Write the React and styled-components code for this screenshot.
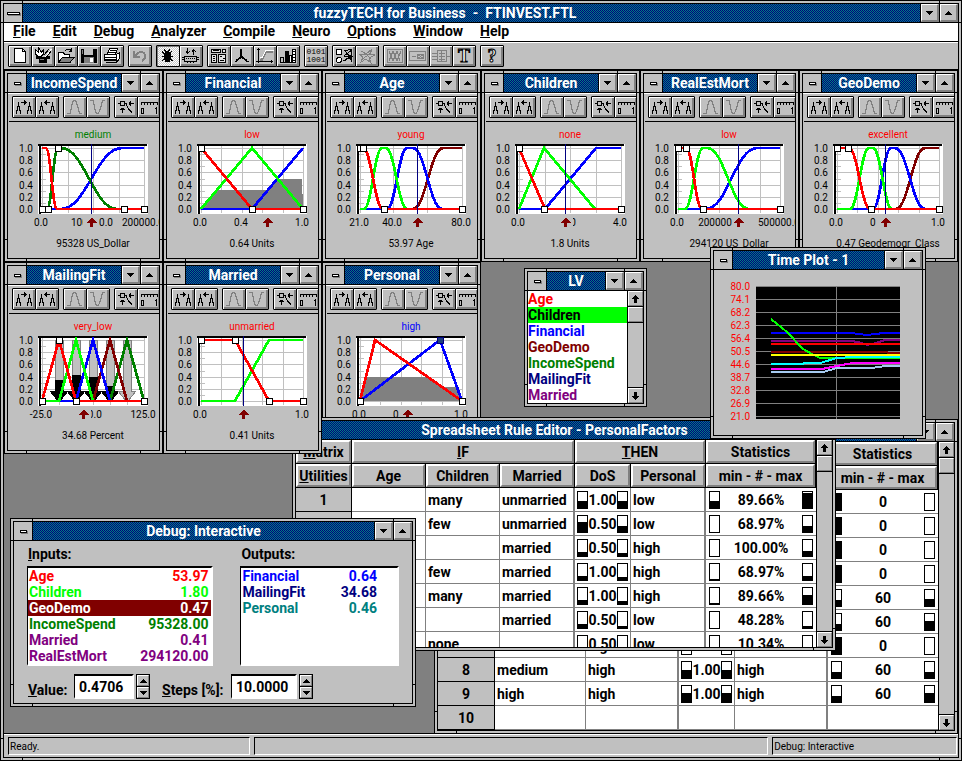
import React from "react";
import styled, { createGlobalStyle, css } from "styled-components";

const SYSTEM = `Roboto, "Liberation Sans", sans-serif`;
const SMALL = `Roboto, "Liberation Sans", sans-serif`;

const GlobalStyle = createGlobalStyle`
  *, *::before, *::after { box-sizing: border-box; }
  body { margin: 0; background: #808080; font: 700 14px/16px ${SYSTEM}; color: #000; }
  button, input { font: inherit; color: inherit; margin: 0; border-radius: 0; }
  ul, p { margin: 0; padding: 0; list-style: none; }
`;

/* ---------- window frames ---------- */

const frame = css`
  border: 1px solid #000;
  padding: 2px;
  background:
    linear-gradient(#000, #000) 21px 0 / 1px 100% no-repeat,
    linear-gradient(#000, #000) calc(100% - 21px) 0 / 1px 100% no-repeat,
    linear-gradient(#000, #000) 0 21px / 100% 1px no-repeat,
    linear-gradient(#000, #000) 0 calc(100% - 21px) / 100% 1px no-repeat,
    #c0c0c0;
  display: flex;
  flex-direction: column;
`;

const Shell = styled.div`
  ${frame}
  min-height: 100vh;
`;

const ChildFrame = styled.section`
  ${frame}
  position: absolute;
  left: ${(p) => p.$x}px;
  top: ${(p) => p.$y}px;
  width: ${(p) => p.$w}px;
  height: ${(p) => p.$h}px;
`;

const Inner = styled.div`
  flex: 1;
  min-height: 0;
  border: 1px solid #000;
  background: #c0c0c0;
  display: flex;
  flex-direction: column;
  overflow: hidden;
`;

const TitleRow = styled.header`
  display: flex;
  flex: none;
  height: 19px;
  border-bottom: 1px solid #000;
`;

/* Two-colour dither: a 2px checkerboard of navy and teal. */
const TitleText = styled.h2`
  flex: 1;
  min-width: 0;
  margin: 0;
  padding-right: ${(p) => (p.$main ? 53 : 0)}px;
  font: 700 14px/18px ${SYSTEM};
  text-align: center;
  white-space: nowrap;
  overflow: hidden;
  color: #fff;
  border: solid #000;
  border-width: 0 1px;
  background: repeating-conic-gradient(#000080 0 25%, #008080 0 50%) 0 0 / 2px 2px;
`;

const SysButton = styled.button`
  width: 18px;
  padding: 0;
  border: 0;
  background: #c0c0c0;
  display: grid;
  place-items: center;
  &::before {
    content: "";
    width: ${(p) => (p.$wide ? 13 : 7)}px;
    height: 3px;
    background: #fff;
    border: 1px solid #000;
    box-shadow: 1px 1px 0 #808080;
  }
`;

const BevelButton = styled.button`
  flex: none;
  width: ${(p) => p.$w || 18}px;
  height: ${(p) => p.$h || 18}px;
  padding: 0;
  display: grid;
  place-items: center;
  background: #c0c0c0;
  border: solid;
  border-width: 1px 2px 2px 1px;
  border-color: #fff #808080 #808080 #fff;
  & + & { box-shadow: -1px 0 0 #000; margin-left: 1px; }
`;

const Tri = ({ up }) => (
  <svg width="7" height="4" viewBox="0 0 7 4" shapeRendering="crispEdges" aria-hidden="true">
    <path d={up ? "M3 0h1v1h1v1h1v1h1v1H0V3h1V2h1V1h1z" : "M0 0h7v1H6v1H5v1H4v1H3V3H2V2H1V1H0z"} />
  </svg>
);

const Arrow = ({ up }) => (
  <svg width="9" height="8" viewBox="0 0 9 8" shapeRendering="crispEdges" aria-hidden="true">
    <path
      d={
        up
          ? "M4 0h1v1h1v1h1v1h1v1h-2v4h-3v-4h-2v-1h1v-1h1v-1h1z"
          : "M3 0h3v4h2v1h-1v1h-1v1h-1v1h-1v-1h-1v-1h-1v-1h-1v-1h2z"
      }
    />
  </svg>
);

function TitleBar({ title, main }) {
  return (
    <TitleRow>
      <SysButton $wide={main} aria-label="Control menu" />
      <TitleText as={main ? "h1" : "h2"} $main={main}>
        {title}
      </TitleText>
      <BevelButton aria-label="Minimize">
        <Tri />
      </BevelButton>
      <BevelButton aria-label="Maximize">
        <Tri up />
      </BevelButton>
    </TitleRow>
  );
}

function Win({ x, y, w, h, title, children }) {
  return (
    <ChildFrame $x={x} $y={y} $w={w} $h={h}>
      <Inner>
        <TitleBar title={title} />
        {children}
      </Inner>
    </ChildFrame>
  );
}

/* ---------- menu and toolbars ---------- */

const MenuBar = styled.nav`
  display: flex;
  gap: 17px;
  height: 19px;
  padding: 0 9px;
  background: #fff;
  border-bottom: 1px solid #000;
`;

const MenuItem = styled.button`
  padding: 0 0 2px;
  border: 0;
  background: none;
  line-height: 16px;
`;

const ToolBar = styled.div`
  display: flex;
  flex: none;
  gap: 4px;
  height: 28px;
  padding: 2px 4px;
  background: #c0c0c0;
  border-top: 1px solid #fff;
  border-bottom: ${(p) => (p.$main ? "1px solid #000" : "0")};
`;

const ToolGroup = styled.div`
  display: flex;
  flex: none;
`;

const ToolButton = styled.button`
  flex: none;
  width: 24px;
  height: 22px;
  padding: 0;
  border: 1px solid #000;
  border-radius: 1px;
  color: ${(p) => (p.$dim ? "#808080" : "#000")};
  background: ${(p) =>
    p.$down ? "repeating-conic-gradient(#fff 0 25%, #c8c8c8 0 50%) 0 0 / 2px 2px" : "#c0c0c0"};
  box-shadow: ${(p) =>
    p.$down ? "inset 1px 1px 0 #808080" : "inset 1px 1px 0 #fff, inset -1px -1px 0 #808080, inset -2px -2px 0 #808080"};
  & + & { margin-left: -1px; }
  svg { display: block; }
`;

const G = ({ children }) => (
  <svg
    width="22"
    height="20"
    viewBox="0 0 22 20"
    fill="none"
    stroke="currentColor"
    shapeRendering="crispEdges"
    aria-hidden="true"
  >
    {children}
  </svg>
);

const twinPeaks =
  "M3.5 13v4M4.500 9v5M5.500 5v5M6.500 9v5M7.500 13v4M14.500 13v4M15.500 9v5M16.500 5v5M17.500 9v5M18.500 13v4";

const icons = {
  page: (
    <G>
      <path d="M5.5 2.5h8l3 3v11h-11z" fill="#fff" />
      <path d="M13.5 2.5v3h3" />
    </G>
  ),
  wizard: (
    <G>
      <path d="M3.500 3.500l3 3v-4.500l3 4 2-2v4l-2 2h-4l-2-2zM12 9l5-6" fill="#fff" />
      <path d="M19.500 3l-6 8" stroke="#fff" />
      <path d="M19 5l-5 7" />
      <path d="M4 10.500h3v1h7v-1h3v2h-3v4H7v-4H4z" fill="currentColor" />
      <path d="M8 13.500h4" stroke="#808080" />
    </G>
  ),
  open: (
    <G>
      <path d="M3.5 16.5v-10h5l1 2h5v3" fill="#fff" />
      <path d="M3.5 16.5l4-5.5h12l-4.500 5.500z" fill="#808080" />
      <path d="M10 4.500q4-3 6 0M16.500 1.500v4h-3" />
    </G>
  ),
  save: (
    <G>
      <path d="M3 3h15l1 1v13H3z" fill="currentColor" stroke="none" />
      <path d="M6 3h9v6H6z" fill="#c0c0c0" stroke="none" />
      <path d="M6 11h10v6H6z" fill="#808080" stroke="none" />
      <path d="M12 12h3v4h-3z" fill="#fff" stroke="none" />
      <path d="M4 4h1v4H4z" fill="#808080" stroke="none" />
    </G>
  ),
  print: (
    <G>
      <path d="M6.500 8l2-5.500h8l-2 5.500" fill="#fff" />
      <path d="M9 4.500h6M8 6.500h6" />
      <path d="M3.500 8.500h12v6h-12zM15.500 8.500l3-2v6l-3 3" fill="#fff" />
      <path d="M3 11.500h12M5 16.500h10l3-3M4 13.500h11" />
    </G>
  ),
  undo: (
    <G>
      <path d="M5 5v6h6M6 10c3-5 10-5 10 0 0 3-1 4-3 5" strokeWidth="2" />
    </G>
  ),
  bug: (
    <G>
      <path d="M8 5h4v1h2v8h-1v2H8v-2H7V7h1z" fill="currentColor" stroke="none" />
      <path d="M7 3l2 3M13 3l-2 3M5 5l3 4M15 5l-3 4M5 10.500h11M5 15l3-3M16 15l-4-3" />
    </G>
  ),
  chip: (
    <G>
      <path d="M4.500 10.500h12v5h-12zM2 11.500h2M2 13.500h2M17 11.500h2M17 13.500h2" />
      <path d="M6 12.500h10" strokeDasharray="1 1" />
      <path d="M7 16.500h8" strokeDasharray="1 2" />
      <path d="M7.500 2v6M6 6.500h3M5.500 5.500h1M8.500 5.500h1M13.500 3v6M12 4.500h3M11.500 5.500h1M14.500 5.500h1" />
    </G>
  ),
  project: (
    <G>
      <path d="M3.500 3.500h9v3h-9zM14.500 3.500h3v3h-3zM3.500 8.500h5v8h-5zM10.500 8.500h7v8h-7z" fill="#e0e0e0" />
      <path d="M5 4.500h6M5 10.500h2M5 12.500h2M5 14.500h2M12 10.500h2M15 12.500h2M12 14.500h4" />
    </G>
  ),
  surface: (
    <G>
      <path d="M10 3v9M10 11l-5 4M11 11l5 4" strokeWidth="2" />
      <path d="M4 15.500h2M15 15.500h3" />
    </G>
  ),
  transfer: (
    <G>
      <path d="M4.500 2v15M2 15.500h17M3 3.500h3M17.500 14v3" />
      <path d="M6 13.500h2l4-8h7" stroke="#808080" strokeWidth="2" />
      <path d="M6 12l2-.5l4-7h8" stroke="#fff" />
    </G>
  ),
  bars: (
    <G>
      <path d="M3 16.500h16M3.500 11.500h3v5h-3z" />
      <path d="M8.500 5.500h3v11h-3z" fill="currentColor" />
      <path d="M12.500 9.500h2v7h-2zM15.500 3.500h3v13h-3z" fill="#fff" />
      <path d="M16 5.500h2M16 8.500h2M16 11.500h2M16 14.500h2" />
    </G>
  ),
  net: (
    <G>
      <path d="M3.500 3.500h5v5h-5z" fill="#fff" />
      <circle cx="6" cy="14" r="2.500" fill="#fff" />
      <path d="M11 5l8-2M12 5l5 5M18 3v11M11 10l8-6M11 10h9M12 14l7-5M12 15l6-6M14 7l5 9M18 11l-8 4" />
    </G>
  ),
  mesh: (
    <G>
      <path d="M5 5l5 3 6-5-2 5 5 1-6 3 2 5-5-4-5 3 2-5-4-3h11M5 14l10-7M8 6l7 7" />
    </G>
  ),
  wave: (
    <G>
      <path d="M3.500 3.500h15v13h-15zM5 5l4 10 4-10 3 10M5 15l4-10 4 10 4-10" />
    </G>
  ),
  card: (
    <G>
      <path d="M2.500 5.500h16v9h-16zM5 10.500h4M10.500 8.500h6v4h-6zM11 9l5 3M16 9l-5 3" />
    </G>
  ),
  block: (
    <G>
      <path d="M7.500 4.500h9v11h-9zM2 7.500h5M2 10.500h5M2 13.500h5M17 10.500h3M9 7.500h6M9 10.500h6M9 13.500h6M11.500 5v10" />
    </G>
  ),
  left: (
    <G>
      <path d={`${twinPeaks}M8 5.500h6M11.500 3v5M12.500 4v3`} />
    </G>
  ),
  right: (
    <G>
      <path d={`${twinPeaks}M8 5.500h6M10.500 3v5M9.500 4v3`} />
    </G>
  ),
  peak: (
    <G>
      <path d="M3 16.500h3v-2l1-2v-2l1-3 1-3 1-1h1l1 1 1 3 1 3v2l1 2v2h3" />
    </G>
  ),
  valley: (
    <G>
      <path d="M3 3.500h3v2l1 2v2l1 3 1 3 1 1h1l1-1 1-3 1-3v-2l1-2v-2h3" />
    </G>
  ),
  points: (
    <G>
      <path d="M5.500 4.500h4v4h-4zM3 6.500h2M10 6.500h2M11.500 7v2M12.500 9v2M13.500 11v2M14.500 12v2M15.500 13v2M16.500 14v2M7.500 11v5M5 12.500h5M6 11.500h3M14 6.500h5M15.500 4v5M14.500 5v3" />
    </G>
  ),
  scale: (
    <G>
      <path d="M3.500 8v-2.500h16v2.500M6.500 6v2M9.500 6v2M12.500 6v2M15.500 6v2M3.500 11.500h2v5h-2zM18.500 10v7M17 11.500h1" />
    </G>
  ),
};

const BinaryLabel = styled.span`
  display: block;
  font: 400 8px/8px "Liberation Mono", monospace;
  text-align: center;
`;

const GlyphText = styled.text`
  font: 700 ${(p) => p.$size}px "Liberation Serif", serif;
  fill: #fff;
  stroke: #000;
`;

const Glyph = ({ ch, size }) => (
  <svg width="22" height="20" viewBox="0 0 22 20" aria-hidden="true">
    <GlyphText $size={size} x="11" y="16" textAnchor="middle">
      {ch}
    </GlyphText>
  </svg>
);

const mainTools = [
  ["page", "wizard", "open", "save", "print"],
  ["-undo"],
  ["+bug", "chip"],
  ["project", "surface", "transfer", "bars"],
  ["binary"],
  ["net", "-mesh"],
  ["-wave", "-card", "-block", "text"],
  ["help"],
];

const editorTools = [
  ["left", "right"],
  ["-peak", "-valley"],
  ["points", "scale"],
];

function toolFace(name) {
  if (name === "binary")
    return (
      <BinaryLabel>
        0101
        <br />
        1001
      </BinaryLabel>
    );
  if (name === "text") return <Glyph ch="T" size={18} />;
  if (name === "help") return <Glyph ch="?" size={18} />;
  return icons[name];
}

const Tools = ({ groups, main }) => (
  <ToolBar $main={main}>
    {groups.map((group) => (
      <ToolGroup key={group[0]}>
        {group.map((id) => {
          const name = id.replace(/^[+-]/, "");
          return (
            <ToolButton key={id} aria-label={name} $dim={id[0] === "-"} $down={id[0] === "+"}>
              {toolFace(name)}
            </ToolButton>
          );
        })}
      </ToolGroup>
    ))}
  </ToolBar>
);

/* ---------- membership function editors ---------- */

const Body = styled.div`
  flex: none;
  margin-left: 1px;
  border-top: 1px solid #000;
  padding: 6px 0 0;
  font: 400 10px/13px ${SMALL};
`;

const Caption = styled.p`
  margin-left: 18px;
  height: 12px;
  text-align: center;
  white-space: nowrap;
  color: ${(p) => p.$color || "#000"};
`;

const Value = styled(Caption)`
  margin-top: 7px;
`;

const Plot = styled.svg`
  display: block;
  margin-left: -1px;
`;

const AxisText = styled.text`
  font: 400 10px ${SMALL};
  fill: ${(p) => p.$color || "#000"};
`;

const PX = (u) => 34 + u;
const PY = (v) => 69 - v * 61;

function linePath(points, smooth) {
  return points
    .map(([u, v], i) => {
      if (i === 0) return `M${PX(u)} ${PY(v)}`;
      const [pu, pv] = points[i - 1];
      if (!smooth || pv === v) return `L${PX(u)} ${PY(v)}`;
      const m = (u - pu) * 0.42;
      return `C${PX(pu + m)} ${PY(pv)} ${PX(u - m)} ${PY(v)} ${PX(u)} ${PY(v)}`;
    })
    .join("");
}

function BlockArrow({ u, level }) {
  const x = PX(u);
  const top = PY(level);
  return (
    <g stroke="#808080">
      <path d={`M${x - 4} 8h8v51h5l-8 10h-2l-8 -10h5z`} fill="#c0c0c0" />
      {level > 0 && <path d={`M${x - 4} ${top}h8V59h5l-8 10h-2l-8 -10h5z`} fill="#000" stroke="#000" />}
    </g>
  );
}

function MembershipPlot({ grid, labels, terms, smooth, boxes, value, arrow, clear = 8, area, bars, picked }) {
  return (
    <Plot width="151" height="90" viewBox="0 0 151 90" shapeRendering="crispEdges">
      <rect x="30" y="4" width="110" height="70" fill="#fff" />
      <path d="M32 74V5" stroke="#000" strokeWidth="2" />
      <path d="M30 5H139" stroke="#000" strokeWidth="2" />
      <g fill="#c0c0c0">
        {[0, 0.2, 0.4, 0.6, 0.8, 1].map((v) => (
          <rect key={v} x="33" y={Math.round(PY(v))} width="104" height="1" />
        ))}
        {[0.1, 0.3, 0.5, 0.7, 0.9].map((v) => (
          <rect key={v} x="33" y={Math.round(PY(v))} width="5" height="1" />
        ))}
        {grid.map((u) => (
          <rect key={u} x={PX(u)} y="6" width="1" height="67" />
        ))}
      </g>
      {area && <path d={`${linePath(area)}z`} fill="#808080" />}
      {bars && bars.map(([u, level]) => <BlockArrow key={u} u={u} level={level} />)}
      <g fill="none" strokeWidth="2.700">
        {terms.map(([color, points]) => (
          <path key={color} d={linePath(points, smooth)} stroke={color} />
        ))}
      </g>
      {value !== undefined && <rect x={PX(value)} y="4" width="1" height="70" fill="#000080" />}
      <g fill="#fff" stroke="#000">
        {boxes.map(([u, v]) => (
          <rect key={`${u}-${v}`} x={PX(u) - 3 + 0.5} y={PY(v) - 3 + 0.5} width="6" height="6" />
        ))}
        {picked && <rect x={PX(picked) - 2.5} y="5.500" width="6" height="6" fill="#204080" stroke="#000080" />}
      </g>
      {["0.0", "0.2", "0.4", "0.6", "0.8", "1.0"].map((t) => (
        <AxisText key={t} x="25" y={Math.round(PY(Number(t))) + 4} textAnchor="end">
          {t}
        </AxisText>
      ))}
      {labels.map(([u, t]) => (
        <AxisText key={t} x={PX(u) - 1} y="86" textAnchor="middle">
          {t}
        </AxisText>
      ))}
      <rect x={PX(arrow) - clear} y="76" width={clear + 8} height="12" fill="#c0c0c0" />
      <path d={`M${PX(arrow)} 78h1l5 5h-4v4h-3v-4h-4z`} fill="#800000" />
    </Plot>
  );
}

const R = "#ff0000";
const L = "#00ff00";
const B = "#0000ff";
const M = "#800000";
const D = "#008000";
const quarters = [0, 26, 51, 77, 102];
const fifths = [0, 20, 41, 61, 82, 102];

const variables = {
  IncomeSpend: {
    term: "medium", color: D, reading: "95328 US_Dollar", smooth: true,
    grid: quarters, labels: [[0, "0.0"], [51, "100000.0"], [102, "200000.0"]],
    terms: [
      [B, [[0, 0], [19, 0], [80, 1], [102, 1]]],
      [D, [[0, 0], [5, 0], [16, 1], [19, 1], [75, 0]]],
      [R, [[0, 1], [4, 1], [15, 0], [102, 0]]],
    ],
    boxes: [[0, 0], [6, 0], [16, 1], [82, 0], [102, 0]], value: 49, arrow: 49,
  },
  Financial: {
    term: "low", color: R, reading: "0.64 Units",
    grid: fifths, labels: [[0, "0.0"], [41, "0.4"], [102, "1.0"]],
    area: [[0, 0], [16, 0.31], [66, 0.31], [76, 0.49], [101, 0.49], [102, 0]],
    terms: [
      [B, [[0, 0], [51, 0], [102, 1]]],
      [L, [[0, 0], [51, 1], [102, 0]]],
      [R, [[0, 1], [51, 0], [102, 0]]],
    ],
    boxes: [[0, 1], [51, 0], [102, 0]], arrow: 66,
  },
  Age: {
    term: "young", color: R, reading: "53.97 Age", smooth: true,
    grid: [0, 33, 67, 102], labels: [[0, "21.0"], [33, "40.0"], [102, "80.0"]],
    terms: [
      [M, [[0, 0], [53, 0], [83, 1], [102, 1]]],
      [B, [[0, 0], [27, 0], [47, 1], [53, 1], [82, 0], [102, 0]]],
      [L, [[0, 0], [4, 0], [22, 1], [26, 1], [47, 0]]],
      [R, [[0, 1], [3, 1], [23, 0], [102, 0]]],
    ],
    boxes: [[0, 1], [3, 1], [24, 0], [102, 0]], value: 57, arrow: 57,
  },
  Children: {
    term: "none", color: R, reading: "1.8 Units",
    grid: quarters, labels: [[0, "0.0"], [51, "2.0"], [102, "4.0"]],
    terms: [
      [B, [[0, 0], [26, 0], [77, 1], [102, 1]]],
      [L, [[0, 0], [25, 1], [76, 0]]],
      [R, [[0, 1], [26, 0], [102, 0]]],
    ],
    boxes: [[0, 1], [25, 0], [102, 0]], value: 46, arrow: 46,
  },
  RealEstMort: {
    term: "low", color: R, reading: "294120 US_Dollar", smooth: true,
    grid: [0, 41, 82, 102], labels: [[0, "0.0"], [38, "200000"], [102, "500000.0"]], clear: 5,
    terms: [
      [B, [[0, 0], [28, 0], [79, 1], [102, 1]]],
      [L, [[0, 0], [7, 0], [25, 1], [29, 1], [71, 0]]],
      [R, [[0, 1], [8, 1], [24, 0], [102, 0]]],
    ],
    boxes: [[0, 1], [8, 1], [25, 0], [102, 0]], value: 60, arrow: 60,
  },
  GeoDemo: {
    term: "excellent", color: R, reading: "0.47 Geodemogr_Class", smooth: true,
    grid: fifths, labels: [[0, "0.0"], [41, "0.4"], [102, "1.0"]], clear: 9,
    terms: [
      [M, [[0, 0], [59, 0], [88, 1], [102, 1]]],
      [B, [[0, 0], [36, 0], [54, 1], [58, 1], [88, 0]]],
      [L, [[0, 0], [13, 0], [32, 1], [36, 1], [55, 0]]],
      [R, [[0, 1], [12, 1], [33, 0], [102, 0]]],
    ],
    boxes: [[0, 1], [11, 1], [34, 0], [102, 0]], value: 48, arrow: 48,
  },
  MailingFit: {
    term: "very_low", color: R, reading: "34.68 Percent",
    grid: [0, 17, 34, 51, 68, 85, 102], labels: [[0, "-25.0"], [51, "50.0"], [102, "125.0"]],
    bars: [[17, 0.33], [34, 0.41], [51, 0.38], [68, 0.23], [85, 0]],
    terms: [
      [D, [[68, 0], [85, 1], [102, 0]]],
      [M, [[51, 0], [68, 1], [85, 0]]],
      [B, [[0, 0], [34, 0], [51, 1], [68, 0]]],
      [L, [[0, 0], [17, 0], [34, 1], [51, 0]]],
      [R, [[0, 0], [17, 1], [34, 0], [102, 0]]],
    ],
    boxes: [[0, 0], [17, 1], [34, 0], [102, 0]], arrow: 41,
  },
  Married: {
    term: "unmarried", color: R, reading: "0.41 Units",
    grid: fifths, labels: [[0, "0.0"], [102, "1.0"]],
    terms: [
      [L, [[0, 0], [34, 0], [68, 1], [102, 1]]],
      [R, [[0, 1], [34, 1], [68, 0], [102, 0]]],
    ],
    boxes: [[0, 1], [34, 1], [68, 0], [102, 0]], value: 42, arrow: 42,
  },
  Personal: {
    term: "high", color: B,
    grid: fifths, labels: [[0, "0.0"], [41, "0.4"], [102, "1.0"]],
    area: [[0, 0], [6, 0.4], [67, 0.4], [82, 0.23], [97, 0.23], [102, 0]],
    terms: [
      [B, [[0, 0], [80, 1], [102, 0]]],
      [R, [[0, 0], [15, 1], [102, 0]]],
    ],
    boxes: [[0, 0], [102, 0]], picked: 80, arrow: 47,
  },
};

function VariableWindow({ name, col, row }) {
  const { term, color, reading, ...plot } = variables[name];
  return (
    <Win x={159 * col} y={192 * row} w={159} h={192} title={name}>
      <Tools groups={editorTools} />
      <Body>
        <Caption $color={color}>{term}</Caption>
        <MembershipPlot {...plot} />
        {reading && <Value>{reading}</Value>}
      </Body>
    </Win>
  );
}

/* ---------- scroll bar ---------- */

const ScrollTrack = styled.div`
  flex: none;
  width: 16px;
  display: flex;
  flex-direction: column;
  background: #c0c0c0;
  border-left: 1px solid #000;
`;

const ScrollPart = styled(BevelButton)`
  border-width: 1px;
  margin-bottom: 1px;
  && { margin-left: 0; box-shadow: 0 1px 0 #000, 0 -1px 0 #000; }
  &:last-child { margin: auto 0 0; }
`;

const ScrollBar = () => (
  <ScrollTrack>
    <ScrollPart $w={15} $h={15} aria-label="Scroll up">
      <Arrow up />
    </ScrollPart>
    <ScrollPart $w={15} $h={15} aria-label="Scroll thumb" />
    <ScrollPart $w={15} $h={15} aria-label="Scroll down">
      <Arrow />
    </ScrollPart>
  </ScrollTrack>
);

/* ---------- lists ---------- */

const List = styled.ul`
  flex: 1;
  min-width: 0;
  background: #fff;
`;

const Item = styled.li`
  display: flex;
  justify-content: space-between;
  height: 16px;
  padding: 0 ${(p) => p.$end || 0}px 0 ${(p) => p.$start || 0}px;
  color: ${(p) => p.$color};
  background: ${(p) => p.$bg || "transparent"};
`;

const Split = styled.div`
  flex: 1;
  min-height: 0;
  display: flex;
`;

const lvItems = [
  ["Age", "#ff0000"],
  ["Children", "#000000", "#00ff00"],
  ["Financial", "#0000ff"],
  ["GeoDemo", "#800000"],
  ["IncomeSpend", "#008000"],
  ["MailingFit", "#000080"],
  ["Married", "#800080"],
];

/* ---------- rule tables ---------- */

const Sheet = styled.div`
  flex: 1;
  min-width: 0;
  background: #fff;
  overflow: hidden;
`;

const Grid = styled.table`
  width: 100%;
  table-layout: fixed;
  border-collapse: separate;
  border-spacing: 0;
`;

const Head = styled.th`
  height: 24px;
  padding: 0;
  border: solid #000;
  border-width: 0 1px 1px 0;
`;

const HeadButton = styled.button`
  display: block;
  width: 100%;
  height: 23px;
  padding: 0;
  background: #c0c0c0;
  border: 2px solid;
  border-color: #fff #808080 #808080 #fff;
  white-space: nowrap;
`;

const RowHead = styled.th`
  height: 24px;
  padding: 0;
  background: #c0c0c0;
  border: solid #000;
  border-width: 0 1px 1px 0;
`;

const Cell = styled.td`
  height: 24px;
  padding: 0 ${(p) => (p.$gauges ? 3 : 2)}px;
  border: solid #808080;
  border-width: 0 ${(p) => (p.$thick ? 2 : 1)}px 1px 0;
  &:last-child { border-right-width: 0; }
`;

const Pair = styled.div`
  display: flex;
  justify-content: space-between;
  align-items: center;
`;

const Gauge = styled.span`
  width: 11px;
  height: 18px;
  border: 1px solid #000;
  background: linear-gradient(to top, #000 ${(p) => p.$level}%, #fff ${(p) => p.$level}%);
`;

const Gauged = ({ low, high, children }) => (
  <Pair>
    <Gauge $level={low} />
    {children}
    <Gauge $level={high} />
  </Pair>
);

const Accel = ({ children }) => (
  <>
    <u>{children[0]}</u>
    {children.slice(1)}
  </>
);

function RuleTable({ widths, heads, groups, rows }) {
  return (
    <Split>
      <Sheet>
        <Grid>
          <colgroup>
            {widths.map((w, i) => (
              <col key={i} width={w} />
            ))}
          </colgroup>
          <thead>
            <tr>
              {groups.map(([label, span], i) => (
                <Head key={i} colSpan={span}><HeadButton>{label}</HeadButton></Head>
              ))}
            </tr>
            <tr>
              {heads.map((label, i) => (
                <Head key={i}><HeadButton>{label}</HeadButton></Head>
              ))}
            </tr>
          </thead>
          <tbody>
            {rows.map(([number, terms, dos, result, stat], i) => (
              <tr key={i}>
                <RowHead>{number}</RowHead>
                {terms.map((t, j) => (
                  <Cell key={j} $thick={j === terms.length - 1}>{t}</Cell>
                ))}
                <Cell>{dos && <Gauged low={dos[0]} high={dos[2]}>{dos[1]}</Gauged>}</Cell>
                <Cell $thick>{result}</Cell>
                <Cell $gauges>{stat && <Gauged low={stat[0]} high={stat[2]}>{stat[1]}</Gauged>}</Cell>
              </tr>
            ))}
          </tbody>
        </Grid>
      </Sheet>
      <ScrollBar />
    </Split>
  );
}

const personalRules = [
  ["1", ["", "many", "unmarried"], [45, "1.00", 45], "low", [45, "89.66%", 94]],
  ["", ["", "few", "unmarried"], [65, "0.50", 35], "low", [0, "68.97%", 38]],
  ["", ["", "", "married"], [25, "0.50", 18], "high", [0, "100.00%", 32]],
  ["", ["", "few", "married"], [25, "1.00", 18], "high", [6, "68.97%", 25]],
  ["", ["", "many", "married"], [25, "1.00", 18], "high", [6, "89.66%", 56]],
  ["", ["", "", "married"], [25, "0.50", 12], "low", [0, "48.28%", 12]],
  ["", ["", "none", ""], [0, "0.50", 0], "low", [0, "10.34%", 0]],
];

const financialRules = [
  ["", ["", ""], null, "", [100, "0", 0]],
  ["", ["", ""], null, "", [100, "0", 0]],
  ["", ["", ""], null, "", [100, "0", 0]],
  ["", ["", ""], null, "", [100, "0", 0]],
  ["", ["", ""], null, "", [35, "60", 45]],
  ["", ["", ""], null, "", [35, "60", 56]],
  ["", ["", "high"], [0, "", 0], "", [100, "0", 0]],
  ["8", ["medium", "high"], [50, "1.00", 50], "high", [35, "60", 38]],
  ["9", ["high", "high"], [56, "1.00", 56], "high", [38, "60", 56]],
  ["10", ["", ""], null, "", null],
];

/* ---------- time plot ---------- */

const TimeBody = styled.div`
  padding: 10px 0 0 16px;
`;

const timeLines = [
  ["#0000ff", "15,47 96,47 102,48 111,49 120,48 127,47 144,47"],
  ["#800080", "15,55 96,55 106,57 111,59 120,57 129,54 144,54"],
  ["#ff0000", "15,58 144,58"],
  ["#800000", "15,66 129,66 134,67 144,67"],
  ["#00ff00", "15,33 31,46 47,63 56,68 64,72 144,72"],
  ["#ffff00", "15,69 144,69"],
  ["#00ffff", "15,78 47,78 48,77 64,77 81,72 97,71 144,71"],
  ["#ff00ff", "15,83 66,83 91,78 97,77 144,77"],
  ["#a6caf0", "15,86 67,86 81,82 116,82 129,80 144,80"],
];

const timeTicks = ["80.0", "74.1", "68.2", "62.3", "56.4", "50.5", "44.6", "38.7", "32.8", "26.9", "21.0"];

const TimeChart = () => (
  <TimeBody>
    <svg width="190" height="150" viewBox="0 0 190 150" shapeRendering="crispEdges">
      <rect x="26" y="6" width="144" height="133" fill="#000" />
      {timeTicks.map((t, i) => (
        <g key={t}>
          <rect x="26" y={6 + 13 * i} width="144" height="1" fill="#808080" />
          <AxisText $color="#ff0000" x="20" y={10 + 13 * i} textAnchor="end">
            {t}
          </AxisText>
        </g>
      ))}
      <rect x="106" y="6" width="1" height="133" fill="#808080" />
      <g transform="translate(26 6)" fill="none" strokeWidth="2">
        {timeLines.map(([color, points]) => (
          <polyline key={color} points={points} stroke={color} />
        ))}
      </g>
    </svg>
  </TimeBody>
);

/* ---------- debug window ---------- */

const DebugBody = styled.div`
  padding: 5px 13px;
  display: flex;
  flex-direction: column;
  gap: 8px;
`;

const Lists = styled.div`
  display: flex;
  gap: 27px;
`;

const Group = styled.div`
  width: ${(p) => p.$w}px;
`;

const GroupLabel = styled.h3`
  margin: 0 0 4px;
  padding-left: 1px;
  font: inherit;
`;

const Well = styled(List)`
  height: 100px;
  border: 1px solid #000;
  border-width: 2px 2px 2px 1px;
  border-color: #000 #fff #fff #000;
`;

const Fields = styled.div`
  display: flex;
  align-items: center;
  gap: 2px;
`;

const FieldLabel = styled.label`
  width: ${(p) => p.$w}px;
  padding: 6px 0 0 1px;
  white-space: nowrap;
`;

const Field = styled.input`
  width: ${(p) => p.$w}px;
  height: 25px;
  padding: 0 4px;
  background: #fff;
  border: 1px solid;
  border-width: 2px 2px 2px 1px;
  border-color: #000 #fff #fff #000;
  outline: 0;
`;

const Spinner = styled.div`
  width: 14px;
  margin-right: ${(p) => p.$after || 0}px;
  border: 1px solid #000;
  display: flex;
  flex-direction: column;
  gap: 1px;
  background: #000;
`;

const SpinButton = styled(BevelButton)`
  border-width: 1px;
  && { margin: 0; box-shadow: none; }
`;

const Spin = ({ after }) => (
  <Spinner $after={after}>
    <SpinButton $w={12} $h={11} aria-label="Increase"><Tri up /></SpinButton>
    <SpinButton $w={12} $h={11} aria-label="Decrease"><Tri /></SpinButton>
  </Spinner>
);

const inputsList = [
  ["Age", "53.97", "#ff0000"],
  ["Children", "1.80", "#00ff00"],
  ["GeoDemo", "0.47", "#ffffff", "#800000"],
  ["IncomeSpend", "95328.00", "#008000"],
  ["Married", "0.41", "#800080"],
  ["RealEstMort", "294120.00", "#800080"],
];

const outputsList = [
  ["Financial", "0.64", "#0000ff"],
  ["MailingFit", "34.68", "#000080"],
  ["Personal", "0.46", "#008080"],
];

const ValueList = ({ items, end }) => (
  <Well>
    {items.map(([name, value, color, bg]) => (
      <Item key={name} $color={color} $bg={bg} $start={1} $end={end}>
        <span>{name}</span>
        <span>{value}</span>
      </Item>
    ))}
  </Well>
);

const DebugPanel = () => (
  <DebugBody>
    <Lists>
      <Group $w={187}>
        <GroupLabel><Accel>Inputs:</Accel></GroupLabel>
        <ValueList items={inputsList} end={3} />
      </Group>
      <Group $w={159}>
        <GroupLabel>Outputs:</GroupLabel>
        <ValueList items={outputsList} end={20} />
      </Group>
    </Lists>
    <Fields>
      <FieldLabel $w={45} htmlFor="value"><Accel>Value:</Accel></FieldLabel>
      <Field id="value" $w={60} defaultValue="0.4706" />
      <Spin after={9} />
      <FieldLabel $w={68} htmlFor="steps"><Accel>Steps [%]:</Accel></FieldLabel>
      <Field id="steps" $w={66} defaultValue="10.0000" />
      <Spin />
    </Fields>
  </DebugBody>
);

/* ---------- status bar ---------- */

const StatusBar = styled.footer`
  display: flex;
  flex: none;
  gap: 4px;
  height: 24px;
  padding: 3px 1px 2px 4px;
  border-top: 1px solid #000;
  box-shadow: inset 0 1px 0 #fff;
  font: 400 10px/17px ${SMALL};
`;

const StatusCell = styled.div`
  flex: ${(p) => p.$flex};
  padding-left: 1px;
  white-space: nowrap;
  border: 1px solid;
  border-color: #000 #fff #fff #000;
`;

const Desktop = styled.main`
  position: relative;
  flex: 1;
  min-height: 660px;
  overflow: hidden;
  background: #808080;
`;

const menus = ["File", "Edit", "Debug", "Analyzer", "Compile", "Neuro", "Options", "Window", "Help"];

export default function App() {
  return (
    <>
      <GlobalStyle />
      <Shell>
        <Inner>
          <TitleBar main title={"fuzzyTECH for Business \u00a0-\u00a0 FTINVEST.FTL"} />
          <MenuBar>
            {menus.map((m) => (
              <MenuItem key={m}>
                <Accel>{m}</Accel>
              </MenuItem>
            ))}
          </MenuBar>
          <Tools groups={mainTools} main />
          <Desktop>
            <VariableWindow name="IncomeSpend" col={0} row={0} />
            <VariableWindow name="Financial" col={1} row={0} />
            <VariableWindow name="Age" col={2} row={0} />
            <VariableWindow name="Children" col={3} row={0} />
            <VariableWindow name="RealEstMort" col={4} row={0} />
            <VariableWindow name="GeoDemo" col={5} row={0} />
            <VariableWindow name="Personal" col={2} row={1} />
            <Win x={520} y={198} w={123} h={139} title="LV">
              <Split>
                <List>
                  {lvItems.map(([name, color, bg]) => (
                    <Item key={name} $color={color} $bg={bg}>
                      {name}
                    </Item>
                  ))}
                </List>
                <ScrollBar />
              </Split>
            </Win>
            <Win x={430} y={349} w={524} h={315} title="">
              <RuleTable
                widths={[57, 91, 93, 56, 93, 110]}
                groups={[["", 1], ["", 2], ["", 2], ["Statistics", 1]]}
                heads={["", "", "", "", "", "min - # - max"]}
                rows={financialRules}
              />
            </Win>
            <Win x={288} y={347} w={544} h={234} title="Spreadsheet Rule Editor - PersonalFactors">
              <RuleTable
                widths={[56, 74, 74, 75, 56, 75, 110]}
                groups={[
                  [<Accel key="m">Matrix</Accel>, 1],
                  [<Accel key="i">IF</Accel>, 3],
                  [<Accel key="t">THEN</Accel>, 2],
                  ["Statistics", 1],
                ]}
                heads={[
                  <Accel key="u">Utilities</Accel>,
                  "Age",
                  "Children",
                  "Married",
                  "DoS",
                  "Personal",
                  "min - # - max",
                ]}
                rows={personalRules}
              />
            </Win>
            <VariableWindow name="MailingFit" col={0} row={1} />
            <VariableWindow name="Married" col={1} row={1} />
            <Win x={6} y={448} w={406} h={189} title="Debug: Interactive">
              <DebugPanel />
            </Win>
            <Win x={706} y={177} w={216} h={192} title="Time Plot - 1">
              <TimeChart />
            </Win>
          </Desktop>
          <StatusBar>
            <StatusCell $flex="242 1 0">Ready.</StatusCell>
            <StatusCell $flex="517 1 0" />
            <StatusCell $flex="184 1 0">Debug: Interactive</StatusCell>
          </StatusBar>
        </Inner>
      </Shell>
    </>
  );
}
